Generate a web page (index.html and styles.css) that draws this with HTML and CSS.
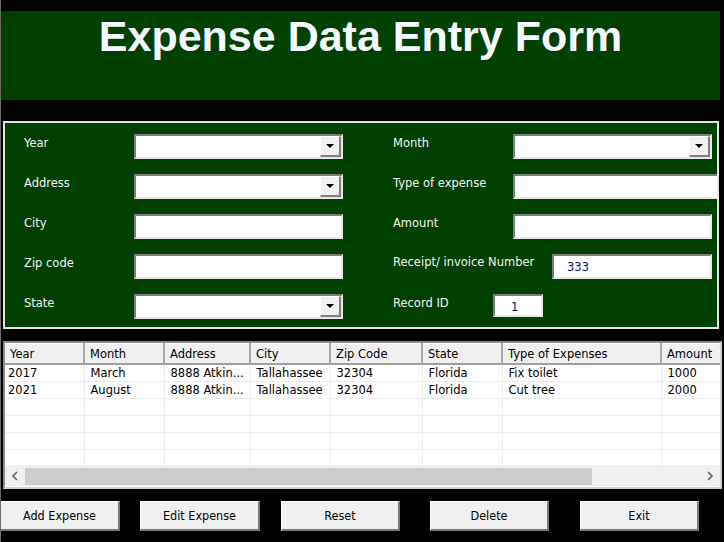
FILE: index.html
```html
<!DOCTYPE html>
<html>
<head>
<meta charset="utf-8">
<link rel="stylesheet" href="styles.css">
</head>
<body>
<div class="page">
  <header class="banner"><h1 class="title">Expense Data Entry Form</h1></header>

  <section class="panel">
    <div class="col col-left">
      <div class="field"><span class="label">Year</span><div class="input combo"><span class="drop"><svg width="8" height="5" viewBox="0 0 8 5"><path d="M0 0H8L4 4Z" fill="#000"/></svg></span></div></div>
      <div class="field"><span class="label">Address</span><div class="input combo"><span class="drop"><svg width="8" height="5" viewBox="0 0 8 5"><path d="M0 0H8L4 4Z" fill="#000"/></svg></span></div></div>
      <div class="field"><span class="label">City</span><div class="input"></div></div>
      <div class="field"><span class="label">Zip code</span><div class="input"></div></div>
      <div class="field"><span class="label">State</span><div class="input combo"><span class="drop"><svg width="8" height="5" viewBox="0 0 8 5"><path d="M0 0H8L4 4Z" fill="#000"/></svg></span></div></div>
    </div>
    <div class="col col-right">
      <div class="field"><span class="label">Month</span><div class="input combo"><span class="drop"><svg width="8" height="5" viewBox="0 0 8 5"><path d="M0 0H8L4 4Z" fill="#000"/></svg></span></div></div>
      <div class="field"><span class="label">Type of expense</span><div class="input wide"></div></div>
      <div class="field"><span class="label">Amount</span><div class="input"></div></div>
      <div class="field"><span class="label label-receipt">Receipt/ invoice Number</span><div class="input short"><span class="val">333</span></div></div>
      <div class="field"><span class="label label-id">Record ID</span><div class="input tiny"><span class="val val-id">1</span></div></div>
    </div>
  </section>

  <section class="grid">
    <div class="grid-body">
      <table class="data">
        <colgroup>
          <col class="c1"><col class="c2"><col class="c3"><col class="c4"><col class="c5"><col class="c6"><col class="c7"><col class="c8">
        </colgroup>
        <thead>
          <tr><th>Year</th><th>Month</th><th>Address</th><th>City</th><th>Zip Code</th><th>State</th><th>Type of Expenses</th><th>Amount</th></tr>
        </thead>
        <tbody>
          <tr><td>2017</td><td>March</td><td>8888 Atkin...</td><td>Tallahassee</td><td>32304</td><td>Florida</td><td>Fix toilet</td><td>1000</td></tr>
          <tr><td>2021</td><td>August</td><td>8888 Atkin...</td><td>Tallahassee</td><td>32304</td><td>Florida</td><td>Cut tree</td><td>2000</td></tr>
          <tr><td></td><td></td><td></td><td></td><td></td><td></td><td></td><td></td></tr>
          <tr><td></td><td></td><td></td><td></td><td></td><td></td><td></td><td></td></tr>
          <tr><td></td><td></td><td></td><td></td><td></td><td></td><td></td><td></td></tr>
          <tr><td></td><td></td><td></td><td></td><td></td><td></td><td></td><td></td></tr>
        </tbody>
      </table>
    </div>
    <div class="hscroll">
      <span class="arrow"><svg width="8" height="10" viewBox="0 0 8 10"><path d="M6 1L2 5L6 9" fill="none" stroke="#606060" stroke-width="1.6"/></svg></span>
      <span class="thumb"></span>
      <span class="track"></span>
      <span class="arrow"><svg width="8" height="10" viewBox="0 0 8 10"><path d="M2 1L6 5L2 9" fill="none" stroke="#606060" stroke-width="1.6"/></svg></span>
    </div>
  </section>

  <nav class="buttons">
    <button class="btn">Add Expense</button>
    <button class="btn b2">Edit Expense</button>
    <button class="btn b3">Reset</button>
    <button class="btn b4">Delete</button>
    <button class="btn b5">Exit</button>
  </nav>
</div>
</body>
</html>
```

FILE: styles.css
```css
html { background: #000; }
body {
  margin: 0;
  background: #000;
  font-family: "DejaVu Sans", sans-serif;
  font-size: 11.5px;
}
.page {
  width: 724px;
  height: 542px;
  overflow: hidden;
  border-left: 1px solid #6a6a6a;
  box-sizing: border-box;
  padding-top: 11px;
}
.banner {
  width: 719px;
  height: 89px;
  background: #004000;
  box-sizing: border-box;
  padding-top: 4px;
}
.title {
  margin: 0;
  font-family: "Liberation Sans", Arial, sans-serif;
  font-weight: bold;
  font-size: 43px;
  line-height: 43px;
  color: #f6f8ff;
  text-align: center;
}
.panel {
  margin: 21px 0 0 2px;
  width: 716px;
  height: 208px;
  box-sizing: border-box;
  border: 2px solid #e4e4e4;
  background: #004000;
  display: grid;
  grid-template-columns: 369px 1fr;
  overflow: hidden;
  padding-top: 11px;
}
.col { display: flex; flex-direction: column; gap: 15px; padding-left: 19px; }
.field { display: flex; align-items: flex-start; height: 25px; }
.label {
  width: 110px;
  flex: none;
  color: #f4f4f4;
  line-height: 13px;
  padding-top: 3px;
}
.col-right .label { width: 120px; }
.col-right .label.label-receipt { width: 159px; padding-top: 2px; }
.col-right .label.label-id { width: 100px; }
.input {
  width: 209px;
  height: 25px;
  flex: none;
  box-sizing: border-box;
  background: #fff;
  border-style: solid;
  border-width: 2px;
  border-color: #7c7c7c #e8e8e8 #e8e8e8 #7c7c7c;
  display: flex;
  align-items: center;
  justify-content: flex-end;
}
.col-right .input { width: 199px; }
.col-right .input.wide { width: 220px; }
.col-right .input.short { width: 160px; justify-content: flex-start; }
.col-right .input.tiny { width: 50px; height: 23px; justify-content: flex-start; }
.val { color: #00106a; padding-left: 13px; }
.val-id { padding-left: 16px; padding-top: 3px; }
.drop {
  width: 21px;
  height: 21px;
  box-sizing: border-box;
  background: #f0f0f0;
  border-style: solid;
  border-width: 1px 2px 2px 1px;
  border-color: #fff #7e7e7e #7e7e7e #fff;
  display: flex;
  align-items: center;
  justify-content: center;
}
.grid {
  margin: 12px 0 0 2px;
  width: 719px;
  height: 148px;
  box-sizing: border-box;
  border-style: solid;
  border-width: 2px;
  border-color: #8a8a8a #d0d0d0 #d0d0d0 #8a8a8a;
  background: #fff;
  display: flex;
  flex-direction: column;
}
.grid-body { height: 122px; overflow: hidden; }
.data {
  border-collapse: collapse;
  table-layout: fixed;
  width: 746px;
  color: #000;
}
.c1 { width: 79px; } .c2 { width: 80px; } .c3 { width: 86px; } .c4 { width: 80px; }
.c5 { width: 92px; } .c6 { width: 80px; } .c7 { width: 159px; } .c8 { width: 90px; }
.data th {
  height: 20px;
  box-sizing: border-box;
  background: #f0f0f0;
  font-weight: normal;
  text-align: left;
  padding: 1px 0 0 5px;
  border-right: 2px solid #a8a8a8;
  border-bottom: 2px solid #a0a0a0;
  border-top: 1px solid #fff;
  white-space: nowrap;
  overflow: hidden;
}
.data td {
  height: 17px;
  box-sizing: border-box;
  padding: 1px 0 0 6px;
  border-right: 1px solid #ececec;
  border-bottom: 1px solid #ececec;
  white-space: nowrap;
  overflow: hidden;
  line-height: 15px;
}
.data td:first-child { padding-left: 3px; }
.hscroll {
  height: 20px;
  background: #f0f0f0;
  display: flex;
  align-items: stretch;
  border-top: 1px solid #f0f0f0;
}
.arrow { width: 20px; flex: none; display: flex; align-items: center; justify-content: center; }
.thumb { width: 567px; background: #cdcdcd; margin: 2px 0 1px 0; flex: none; }
.track { flex: 1; }
.buttons {
  display: flex;
  margin: 12px 0 0 -1px;
}
.btn {
  width: 120px;
  height: 30px;
  flex: none;
  box-sizing: border-box;
  background: #f0f0f0;
  border-style: solid;
  border-width: 1px 2px 2px 1px;
  border-color: #fff #7a7a7a #7a7a7a #fff;
  font-family: "DejaVu Sans Condensed", "DejaVu Sans", sans-serif;
  font-stretch: condensed;
  font-size: 12.5px;
  color: #000;
  padding: 0;
}
.b2 { margin-left: 20px; }
.b3 { margin-left: 21px; width: 119px; }
.b4 { margin-left: 30px; width: 119px; }
.b5 { margin-left: 31px; width: 119px; }
```
